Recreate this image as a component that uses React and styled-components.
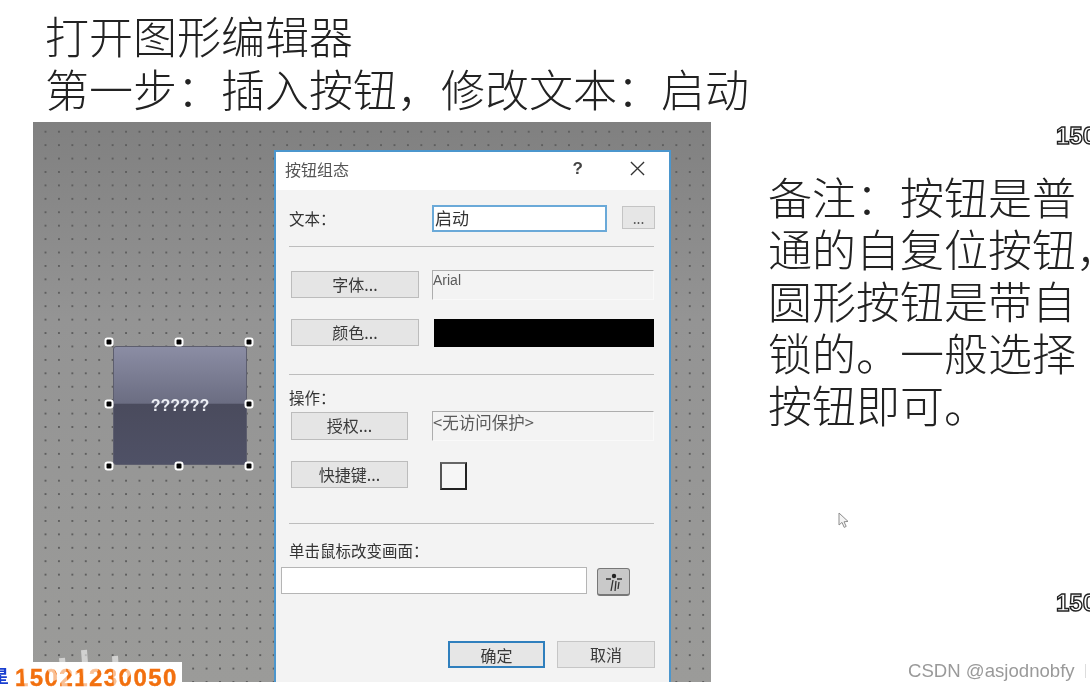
import React from "react";
import styled, { createGlobalStyle } from "styled-components";

const sans = `"Noto Sans CJK SC", "Liberation Sans", sans-serif`;

const Global = createGlobalStyle`
  html, body { margin: 0; padding: 0; background: #fff; }
  body { font-family: ${sans}; color: #222; }
`;

const noteLines = ["备注：按钮是普", "通的自复位按钮，", "圆形按钮是带自", "锁的。一般选择", "按钮即可。"];
const handles = [
  [0, 0], [50, 0], [100, 0],
  [0, 50], [100, 50],
  [0, 100], [50, 100], [100, 100],
];

export default function App() {
  return (
    <Page>
      <Global />
      <Heading>
        <HeadLine>打开图形编辑器</HeadLine>
        <HeadLine>第一步：插入按钮，修改文本：启动</HeadLine>
      </Heading>
      <Main>
        <Canvas>
          <ScreenButton>
            ??????
            <HandleFrame>
              {handles.map(([x, y]) => <Handle key={`${x}-${y}`} $x={x} $y={y} />)}
            </HandleFrame>
          </ScreenButton>
          <Dialog>
            <TitleBar>
              <DialogTitle>按钮组态</DialogTitle>
              <HelpMark>?</HelpMark>
              <CloseIcon viewBox="0 0 16 16">
                <path d="M1 1l14 14M15 1L1 15" stroke="#333" strokeWidth="1.4" fill="none" />
              </CloseIcon>
            </TitleBar>
            <Body>
              <Row $top={15}>
                <Label $width={143}>文本：</Label>
                <TextInput>启动</TextInput>
                <MoreButton>...</MoreButton>
              </Row>
              <Divider $top={14} />
              <Row $top={24}>
                <ActionButton $width={128}>字体...</ActionButton>
                <ReadOnly $left={13} $latin>Arial</ReadOnly>
              </Row>
              <Row $top={19}>
                <ActionButton $width={128}>颜色...</ActionButton>
                <Swatch />
              </Row>
              <Divider $top={27} />
              <Label $top={12}>操作：</Label>
              <Row $top={5}>
                <ActionButton $width={117} $tall>授权...</ActionButton>
                <ReadOnly $left={24}>&lt;无访问保护&gt;</ReadOnly>
              </Row>
              <Row $top={20}>
                <ActionButton $width={117}>快捷键...</ActionButton>
                <CheckBox />
              </Row>
              <Divider $top={33} />
              <Label $top={16}>单击鼠标改变画面：</Label>
              <Row $top={7}>
                <ScreenInput />
                <PickButton>
                  <svg viewBox="0 0 24 24" width="24" height="24">
                    <circle cx="12" cy="6" r="2.2" fill="#222" />
                    <path d="M4 9h5M15 9h5M11 10l-2 11M14 11l-1 10M17 12l-1 7" stroke="#333" strokeWidth="1.3" fill="none" />
                  </svg>
                </PickButton>
              </Row>
              <Footer>
                <FooterButton $primary>确定</FooterButton>
                <FooterButton>取消</FooterButton>
              </Footer>
            </Body>
          </Dialog>
        </Canvas>
        <Note>
          {noteLines.map(line => <NoteLine key={line}>{line}</NoteLine>)}
        </Note>
      </Main>

      <PhoneNumber $top={136}>150</PhoneNumber>
      <PhoneNumber $top={603}>150</PhoneNumber>
      <Pointer viewBox="0 0 12 17">
        <path d="M1 1l0 12 3-2.6 2.2 5 2-1-2.2-4.6 4-.4z" fill="#f4f4f4" stroke="#8d8d8d" strokeWidth="1" />
      </Pointer>
      <BlueChar>星</BlueChar>
      <Contact>15021230050</Contact>
      <Strokes viewBox="0 0 120 46">
        <path d="M3 0l5 46M42 14l3 32M64 6l3 40M95 12l2 34M30 24l6 12M50 24l8 10M76 24l-8 12M112 24l-8 10" stroke="#fff" strokeOpacity=".55" strokeWidth="6" fill="none" />
      </Strokes>
      <Credit>CSDN @asjodnobfy</Credit>
      <CreditBar />
    </Page>
  );
}

const Page = styled.div`
  position: relative;
  width: 1090px;
  height: 690px;
  overflow: hidden;
  background: #fff;
  filter: blur(0.4px);
`;

const Heading = styled.div`
  height: 122px;
  box-sizing: border-box;
  padding: 9px 0 0 45px;
`;

const HeadLine = styled.div`
  font-size: 44px;
  line-height: 53px;
  font-weight: 300;
  color: #222;
  white-space: nowrap;
`;

const Main = styled.div`
  display: flex;
  align-items: flex-start;
  padding-left: 33px;
`;

const Canvas = styled.div`
  position: relative;
  flex: none;
  width: 678px;
  height: 560px;
  overflow: hidden;
  background-color: #8f8f8f;
  background-image:
    radial-gradient(circle at center, #5e5e5e 0, #5e5e5e 0.8px, transparent 1.3px),
    linear-gradient(#808080, #949494 35%, #9b9b99);
  background-size: 13.43px 13.43px, 100% 100%;
  background-position: 5.8px 3px, 0 0;
`;

const ScreenButton = styled.div`
  position: absolute;
  left: 80px;
  top: 224px;
  width: 134px;
  height: 119px;
  box-sizing: border-box;
  display: flex;
  align-items: center;
  justify-content: center;
  border: 1px solid #5d5e6e;
  border-radius: 3px;
  background: linear-gradient(#8b8da4, #6b6d82 48%, #4a4b5d 49%, #4f5166);
  color: #eceef4;
  font-family: "Liberation Sans", sans-serif;
  font-size: 16px;
  font-weight: 700;
`;

const HandleFrame = styled.div`
  position: absolute;
  left: -5px;
  top: -5px;
  width: 140px;
  height: 124px;
`;

const Handle = styled.span`
  position: absolute;
  left: ${p => p.$x}%;
  top: ${p => p.$y}%;
  width: 5px;
  height: 5px;
  transform: translate(-50%, -50%);
  background: #000;
  border: 2.5px solid #fff;
  border-radius: 3px;
`;

const Dialog = styled.div`
  position: absolute;
  left: 241px;
  top: 28px;
  width: 397px;
  height: 540px;
  box-sizing: border-box;
  border: 2px solid #4b96cd;
  border-bottom: 0;
  background: #f3f3f3;
  display: flex;
  flex-direction: column;
`;

const TitleBar = styled.div`
  flex: none;
  height: 38px;
  box-sizing: border-box;
  display: flex;
  align-items: center;
  padding: 0 24px 5px 9px;
  background: #fff;
`;

const DialogTitle = styled.div`
  font-size: 16px;
  color: #555;
  margin-right: auto;
`;

const HelpMark = styled.span`
  font-family: "Liberation Sans", sans-serif;
  font-size: 17px;
  font-weight: 700;
  color: #444;
  margin-right: 47px;
`;

const CloseIcon = styled.svg`
  width: 15px;
  height: 15px;
`;

const Body = styled.div`
  flex: 1;
  display: flex;
  flex-direction: column;
  padding: 0 15px 0 13px;
`;

const Row = styled.div`
  display: flex;
  align-items: flex-start;
  margin-top: ${p => p.$top || 0}px;
`;

const Label = styled.div`
  flex: none;
  font-size: 15.5px;
  line-height: 20px;
  color: #333;
  margin-top: ${p => p.$top || 0}px;
  ${p => p.$width && `width: ${p.$width}px; padding-top: 3px;`}
`;

const TextInput = styled.div`
  flex: none;
  width: 175px;
  height: 27px;
  box-sizing: border-box;
  border: 2px solid #6aa9d8;
  background: #fff;
  padding-left: 1px;
  font-size: 17px;
  line-height: 22px;
  color: #333;
`;

const MoreButton = styled.div`
  flex: none;
  width: 33px;
  height: 23px;
  margin: 1px 0 0 15px;
  box-sizing: border-box;
  border: 1px solid #c4c4c4;
  background: #e6e6e6;
  text-align: center;
  font-size: 14px;
  line-height: 22px;
  color: #555;
`;

const ActionButton = styled.div`
  flex: none;
  width: ${p => p.$width}px;
  height: ${p => (p.$tall ? 28 : 27)}px;
  margin-left: 2px;
  box-sizing: border-box;
  border: 1.5px solid #bcbcbc;
  background: #e5e5e5;
  text-align: center;
  font-size: 16px;
  line-height: 25px;
  color: #3a3a3a;
`;

const ReadOnly = styled.div`
  flex: none;
  width: 222px;
  height: 30px;
  margin: -1px 0 0 ${p => p.$left}px;
  box-sizing: border-box;
  border-top: 1.5px solid #adadad;
  border-left: 1px solid #adadad;
  border-bottom: 1px solid #f9f9f9;
  border-right: 1px solid #f9f9f9;
  font-family: ${p => (p.$latin ? `"Liberation Sans", sans-serif` : sans)};
  font-size: ${p => (p.$latin ? 14 : 16.5)}px;
  line-height: ${p => (p.$latin ? 18 : 20)}px;
  color: #5a5a5a;
  white-space: nowrap;
`;

const Swatch = styled.div`
  flex: none;
  width: 220px;
  height: 28px;
  margin-left: 15px;
  background: #000;
`;

const Divider = styled.div`
  flex: none;
  height: 1px;
  background: #bdbdbd;
  margin-top: ${p => p.$top}px;
`;

const CheckBox = styled.div`
  flex: none;
  width: 27px;
  height: 28px;
  margin: 1px 0 0 32px;
  box-sizing: border-box;
  border: 2px solid #222;
  border-top-color: #666;
  border-left-color: #555;
  background: #f6f6f6;
`;

const ScreenInput = styled.div`
  flex: none;
  width: 306px;
  height: 27px;
  margin-left: -8px;
  box-sizing: border-box;
  border: 1.5px solid #b5b5b5;
  background: #fff;
`;

const PickButton = styled.div`
  flex: none;
  width: 33px;
  height: 28px;
  margin: 1px 0 0 10px;
  box-sizing: border-box;
  display: flex;
  align-items: center;
  justify-content: center;
  border: 1.5px solid #777;
  border-bottom-width: 2.5px;
  border-radius: 3px;
  background: #c9c9c9;
`;

const Footer = styled.div`
  display: flex;
  justify-content: flex-end;
  gap: 12px;
  margin: 45px -1px 0 0;
`;

const FooterButton = styled.div`
  width: ${p => (p.$primary ? 97 : 98)}px;
  height: 27px;
  box-sizing: border-box;
  border: ${p => (p.$primary ? "2px solid #2f7fbd" : "1.5px solid #c6c6c6")};
  background: #e6e6e6;
  text-align: center;
  font-size: 16px;
  line-height: 24px;
  color: #3a3a3a;
`;

const Note = styled.div`
  flex: none;
  margin: 48px 0 0 57px;
`;

const NoteLine = styled.div`
  font-size: 44px;
  line-height: 52px;
  font-weight: 300;
  color: #222;
  white-space: nowrap;
`;

const PhoneNumber = styled.div`
  position: absolute;
  left: 1056px;
  top: ${p => p.$top - 13}px;
  font-family: "Liberation Sans", sans-serif;
  font-size: 24px;
  line-height: 26px;
  font-weight: 700;
  color: #fff;
  -webkit-text-stroke: 1.4px #222;
`;

const Pointer = styled.svg`
  position: absolute;
  left: 838px;
  top: 512px;
  width: 12px;
  height: 17px;
`;

const BlueChar = styled.div`
  position: absolute;
  left: -9px;
  top: 663px;
  font-size: 18px;
  line-height: 24px;
  font-weight: 700;
  color: #1a3fd0;
`;

const Contact = styled.div`
  position: absolute;
  left: 14px;
  top: 662px;
  width: 168px;
  height: 28px;
  box-sizing: border-box;
  padding-left: 1px;
  background: #fff;
  font-family: "Liberation Sans", sans-serif;
  font-size: 24px;
  line-height: 32px;
  font-weight: 700;
  letter-spacing: 1.45px;
  color: #f2700f;
  white-space: nowrap;
  -webkit-text-stroke: 0.4px #f2700f;
`;

const Strokes = styled.svg`
  position: absolute;
  left: 20px;
  top: 644px;
  width: 120px;
  height: 46px;
`;

const Credit = styled.div`
  position: absolute;
  left: 908px;
  top: 660px;
  font-family: "Liberation Sans", sans-serif;
  font-size: 18.6px;
  line-height: 22px;
  color: #9a9a9a;
  white-space: nowrap;
`;

const CreditBar = styled.div`
  position: absolute;
  left: 1085px;
  top: 664px;
  width: 1px;
  height: 14px;
  background: #ddd;
`;
